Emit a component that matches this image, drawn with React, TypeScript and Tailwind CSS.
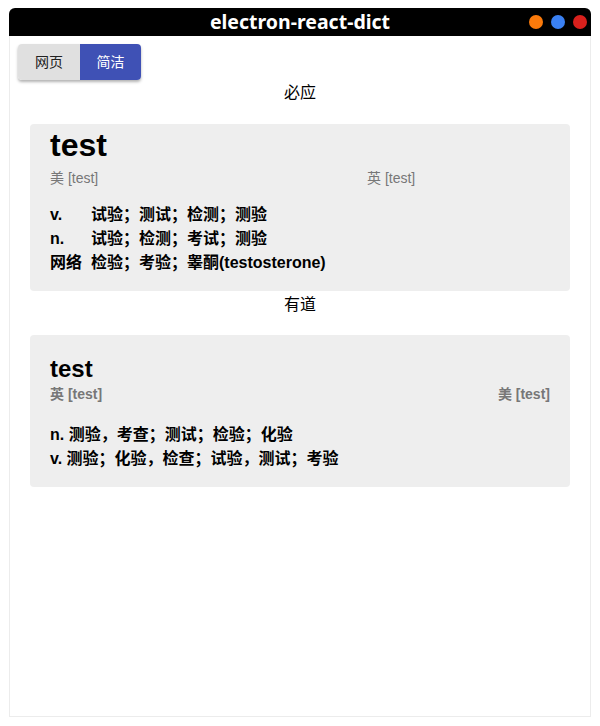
import React from 'react';

const bingDefs = [
  { pos: 'v.', def: '试验；测试；检测；测验' },
  { pos: 'n.', def: '试验；检测；考试；测验' },
  { pos: '网络', def: '检验；考验；睾酮(testosterone)' },
];

const youdaoDefs = ['n. 测验，考查；测试；检验；化验', 'v. 测验；化验，检查；试验，测试；考验'];

const font = { fontFamily: '"Liberation Sans", "Noto Sans CJK SC", sans-serif' };

export default function App() {
  return (
    <div className="w-[600px] h-[726px] bg-white pt-2 px-[9px]" style={font}>
      <div className="flex flex-col h-[709px] border-x border-b border-[#ececec] rounded-t-md">
        {/* title bar */}
        <div className="relative h-7 bg-black rounded-t-md flex items-center justify-center -mx-px">
          <span className="text-white text-[19.5px] font-bold" style={{ fontFamily: '"Noto Sans", sans-serif' }}>
            electron-react-dict
          </span>
          <div className="absolute right-[4px] top-[7px] flex gap-2">
            <span className="w-[14px] h-[14px] rounded-full bg-[#fb7a0b]"></span>
            <span className="w-[14px] h-[14px] rounded-full bg-[#3a80f2]"></span>
            <span className="w-[14px] h-[14px] rounded-full bg-[#d8201c]"></span>
          </div>
        </div>

        {/* tabs */}
        <div className="px-2 pt-2">
          <div className="inline-flex rounded overflow-hidden shadow-[0_2px_3px_rgba(0,0,0,0.3)]">
            <button className="w-[62px] h-9 bg-[#e0e0e0] text-[#222] text-sm">网页</button>
            <button className="w-[61px] h-9 bg-[#3f51b5] text-white text-sm">简洁</button>
          </div>
        </div>

        <div className="text-center text-base text-black leading-6 mt-[1px]">必应</div>

        <div className="mx-5 mt-[19px] bg-[#eeeeee] rounded pl-5 pr-5 pt-[4px] pb-[16px]">
          <div className="text-[32px] font-bold leading-[34px] text-black">test</div>
          <div className="flex text-sm text-[#777] mt-[6px] leading-5">
            <span className="w-[317px]">美 [test]</span>
            <span>英 [test]</span>
          </div>
          <div className="mt-[15px] text-base font-bold text-black leading-6">
            {bingDefs.map(d => (
              <div key={d.pos} className="flex">
                <span className="w-[41px]">{d.pos}</span>
                <span>{d.def}</span>
              </div>
            ))}
          </div>
        </div>

        <div className="text-center text-base text-black leading-6 mt-[2px]">有道</div>

        <div className="mx-5 mt-[18px] bg-[#eeeeee] rounded px-5 pt-[19px] pb-[16px]">
          <div className="text-2xl font-bold leading-[30px] text-black">test</div>
          <div className="flex justify-between text-sm font-bold text-[#777] leading-5">
            <span>英 [test]</span>
            <span>美 [test]</span>
          </div>
          <div className="mt-[19px] text-base font-bold text-black leading-6">
            {youdaoDefs.map(d => (
              <div key={d}>{d}</div>
            ))}
          </div>
        </div>
      </div>
    </div>
  );
}
